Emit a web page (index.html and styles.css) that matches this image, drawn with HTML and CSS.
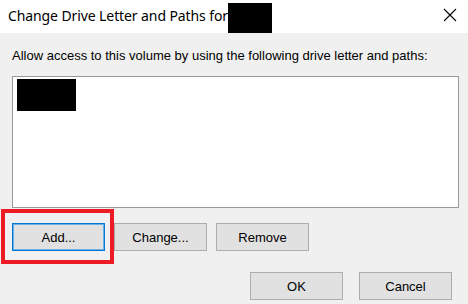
FILE: index.html
```html
<!DOCTYPE html>
<html lang="en">
<head>
    <meta charset="UTF-8">
    <title>Change Drive Letter and Paths</title>
    <link rel="stylesheet" href="styles.css">
</head>
<body>
<div class="dialog">
    <div class="titlebar">
        <span class="title">Change Drive Letter and Paths for</span>
        <span class="redact title-redact"></span>
        <svg class="close" width="14" height="14" viewBox="0 0 14 14">
            <path d="M1 1L13 13M13 1L1 13" stroke="#000" stroke-width="1.1" fill="none"/>
        </svg>
    </div>
    <div class="content">
        <p class="label">Allow access to this volume by using the following drive letter and paths:</p>
        <div class="listbox">
            <div class="redact list-redact"></div>
        </div>
        <div class="actions">
            <div class="marked">
                <button class="btn btn-default">Add...</button>
                <span class="highlight"></span>
            </div>
            <button class="btn">Change...</button>
            <button class="btn">Remove</button>
        </div>
        <div class="footer">
            <button class="btn">OK</button>
            <button class="btn">Cancel</button>
        </div>
    </div>
</div>
</body>
</html>
```

FILE: styles.css
```css
body {
    margin: 0;
    padding: 0;
    background: #f0f0f0;
    font-family: 'Liberation Sans', Arial, sans-serif;
    -webkit-font-smoothing: antialiased;
}

.dialog {
    width: 468px;
    height: 304px;
    display: flex;
    flex-direction: column;
}

.titlebar {
    height: 33px;
    background: #fff;
    display: flex;
    align-items: center;
    padding-left: 8px;
}
.title {
    font-family: 'Noto Sans', 'Open Sans', sans-serif;
    font-size: 14px;
    letter-spacing: -0.1px;
    color: #000;
    margin-top: -2px;
}
.redact {
    background: #000;
    display: block;
}
.title-redact {
    width: 44px;
    height: 30px;
    align-self: flex-end;
}
.close {
    margin-left: auto;
    margin-right: 11px;
    margin-top: -3px;
}

.content {
    flex: 1;
    padding: 15px 9px 0 12px;
}
.label {
    margin: 0;
    font-size: 13px;
    line-height: 16px;
    color: #000;
}
.listbox {
    margin-top: 12px;
    background: #fff;
    border: 1px solid #9a9a9a;
    padding: 2px 4px;
    height: 126px;
}
.list-redact {
    width: 59px;
    height: 32px;
}

.actions {
    margin-top: 15px;
    display: flex;
    gap: 9px;
}
.marked {
    position: relative;
}
.highlight {
    position: absolute;
    left: -11px;
    top: -14px;
    width: 113px;
    height: 55px;
    border: 4px solid #ed1c24;
    box-sizing: border-box;
}

.btn {
    width: 93px;
    height: 28px;
    margin: 0;
    padding: 0;
    background: #e1e1e1;
    border: 1px solid #adadad;
    font-family: 'Liberation Sans', Arial, sans-serif;
    font-size: 13px;
    color: #000;
    display: block;
}
.btn-default {
    border-color: #0078d7;
    box-shadow: inset 0 0 0 1px #6aaee6;
}

.footer {
    margin-top: 21px;
    display: flex;
    justify-content: flex-end;
    gap: 16px;
    padding-right: 7px;
}
```
